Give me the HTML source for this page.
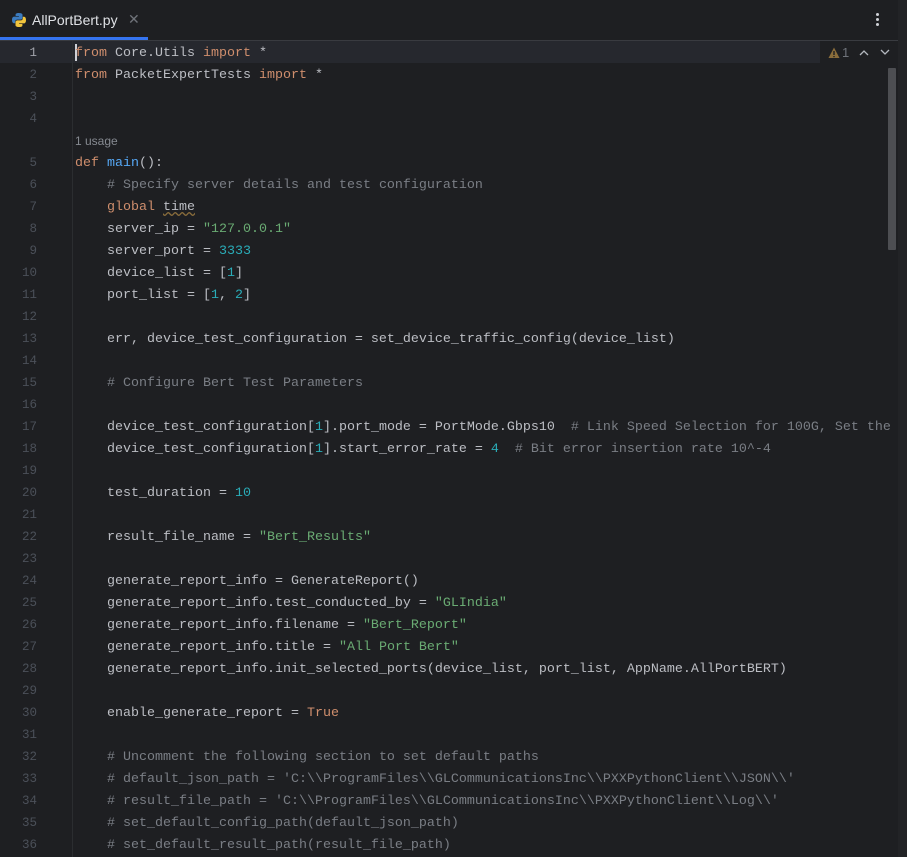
<!DOCTYPE html>
<html><head><meta charset="utf-8"><style>
html,body{margin:0;padding:0;background:#1e1f22;width:907px;height:857px;overflow:hidden;position:relative;font-family:"Liberation Mono",monospace;}
.tabbar{position:absolute;left:0;top:0;width:907px;height:40px;background:#1e1f22;border-bottom:1px solid #393b40;}
.tab{position:absolute;left:0;top:0;width:148px;height:40px;}
.tab .name{position:absolute;left:32px;top:12px;font-family:"Liberation Sans",sans-serif;font-size:14px;color:#dfe1e5;}
.tab .x{position:absolute;left:128px;top:11px;font-family:"Liberation Sans",sans-serif;font-size:14px;color:#6f737a;}
.tab .ul{position:absolute;left:0;top:37px;width:148px;height:3px;background:#3574f0;}
.dots{position:absolute;left:876px;top:13px;width:3px;}
.dots i{display:block;width:3px;height:3px;background:#cfd1d6;border-radius:2px;margin-bottom:2px;}
.curline{position:absolute;left:0;top:41px;width:820px;height:22px;background:#26282e;}
.gutterline{position:absolute;left:72px;top:41px;width:1px;height:816px;background:#2b2d30;}
.ln{position:absolute;left:0;width:37px;text-align:right;font-size:12.5px;color:#4b5059;}
.code{position:absolute;left:75px;font-size:13.33px;color:#bcbec4;white-space:pre;}
.k{color:#cf8e6d}.s{color:#6aab73}.n{color:#2aacb8}.c{color:#7a7e85}.f{color:#56a8f5}
.usage{position:absolute;left:75px;top:134px;font-family:"Liberation Sans",sans-serif;font-size:12px;color:#868a91;}
.caret{position:absolute;left:75px;top:44px;width:2px;height:17px;background:#ced0d6;}
.scroll{position:absolute;left:888px;top:68px;width:8px;height:182px;background:#4d4e52;border-radius:1px;}
.strip{position:absolute;left:898px;top:0;width:9px;height:857px;background:#222326;}
.warn{position:absolute;left:820px;top:43px;width:76px;height:20px;background:#1e1f22;font-family:"Liberation Sans",sans-serif;font-size:13px;color:#6f737a;}
</style></head><body>
<div class="tabbar">
 <div class="tab">
  <svg style="position:absolute;left:11px;top:12px" width="16" height="16" viewBox="0 0 16 16"><path d="M7.8 1C4.5 1 4.6 2.4 4.6 2.4V4h3.3v.6H3.3S1 4.3 1 7.9s2 3.4 2 3.4h1.2V9.6s0-2 2-2h3.4s1.9 0 1.9-1.9V2.9S11.8 1 7.8 1z" fill="#3b7bbf"/><path d="M8.2 15c3.3 0 3.2-1.4 3.2-1.4V12H8.1v-.6h4.6S15 11.7 15 8.1s-2-3.4-2-3.4h-1.2v1.7s0 2-2 2H6.4s-1.9 0-1.9 1.9v2.8S4.2 15 8.2 15z" fill="#f2c53d"/></svg>
  <div class="name">AllPortBert.py</div><div class="x">✕</div><div class="ul"></div>
 </div>
 <div class="dots"><i></i><i></i><i></i></div>
</div>
<div class="strip"></div>
<div class="curline"></div>
<div class="gutterline"></div>
<div class="warn">
 <svg style="position:absolute;left:8px;top:4px" width="12" height="12" viewBox="0 0 12 12"><path d="M6 0.5L11.5 11H0.5z" fill="#8a6d3b"/><rect x="5.3" y="4" width="1.4" height="4" fill="#1e1f22"/><rect x="5.3" y="9" width="1.4" height="1.2" fill="#1e1f22"/></svg>
 <span style="position:absolute;left:22px;top:2px">1</span>
 <svg style="position:absolute;left:39px;top:6px" width="10" height="7" viewBox="0 0 10 7"><path d="M1 6L5 2l4 4" stroke="#b4b8bf" stroke-width="1.3" fill="none"/></svg>
 <svg style="position:absolute;left:60px;top:6px" width="10" height="7" viewBox="0 0 10 7"><path d="M1 1l4 4 4-4" stroke="#b4b8bf" stroke-width="1.3" fill="none"/></svg>
</div>
<div class="scroll"></div>
<div class="caret"></div>
<div class="usage">1 usage</div>
<div id="c"></div>
<script>
var L=[
'<span class="k">from</span> Core.Utils <span class="k">import</span> *',
'<span class="k">from</span> PacketExpertTests <span class="k">import</span> *',
'','',
'<span class="k">def</span> <span class="f">main</span>():',
'    <span class="c"># Specify server details and test configuration</span>',
'    <span class="k">global</span> <span style="text-decoration:underline wavy #8a6d3b">time</span>',
'    server_ip = <span class="s">"127.0.0.1"</span>',
'    server_port = <span class="n">3333</span>',
'    device_list = [<span class="n">1</span>]',
'    port_list = [<span class="n">1</span>, <span class="n">2</span>]',
'',
'    err, device_test_configuration = set_device_traffic_config(device_list)',
'',
'    <span class="c"># Configure Bert Test Parameters</span>',
'',
'    device_test_configuration[<span class="n">1</span>].port_mode = PortMode.Gbps10  <span class="c"># Link Speed Selection for 100G, Set the</span>',
'    device_test_configuration[<span class="n">1</span>].start_error_rate = <span class="n">4</span>  <span class="c"># Bit error insertion rate 10^-4</span>',
'',
'    test_duration = <span class="n">10</span>',
'',
'    result_file_name = <span class="s">"Bert_Results"</span>',
'',
'    generate_report_info = GenerateReport()',
'    generate_report_info.test_conducted_by = <span class="s">"GLIndia"</span>',
'    generate_report_info.filename = <span class="s">"Bert_Report"</span>',
'    generate_report_info.title = <span class="s">"All Port Bert"</span>',
'    generate_report_info.init_selected_ports(device_list, port_list, AppName.AllPortBERT)',
'',
'    enable_generate_report = <span class="k">True</span>',
'',
'    <span class="c"># Uncomment the following section to set default paths</span>',
'    <span class="c"># default_json_path = \'C:\\\\ProgramFiles\\\\GLCommunicationsInc\\\\PXXPythonClient\\\\JSON\\\\\'</span>',
'    <span class="c"># result_file_path = \'C:\\\\ProgramFiles\\\\GLCommunicationsInc\\\\PXXPythonClient\\\\Log\\\\\'</span>',
'    <span class="c"># set_default_config_path(default_json_path)</span>',
'    <span class="c"># set_default_result_path(result_file_path)</span>'
];
var h='';
for(var i=0;i<L.length;i++){
 var y=52+i*22+(i>=4?22:0);
 h+='<div class="ln" style="top:'+(y-6)+'px;'+(i==0?'color:#a1a3ab':'')+'">'+(i+1)+'</div>';
 h+='<div class="code" style="top:'+(y-6)+'px">'+L[i]+'</div>';
}
document.getElementById('c').innerHTML=h;
</script>
</body></html>
